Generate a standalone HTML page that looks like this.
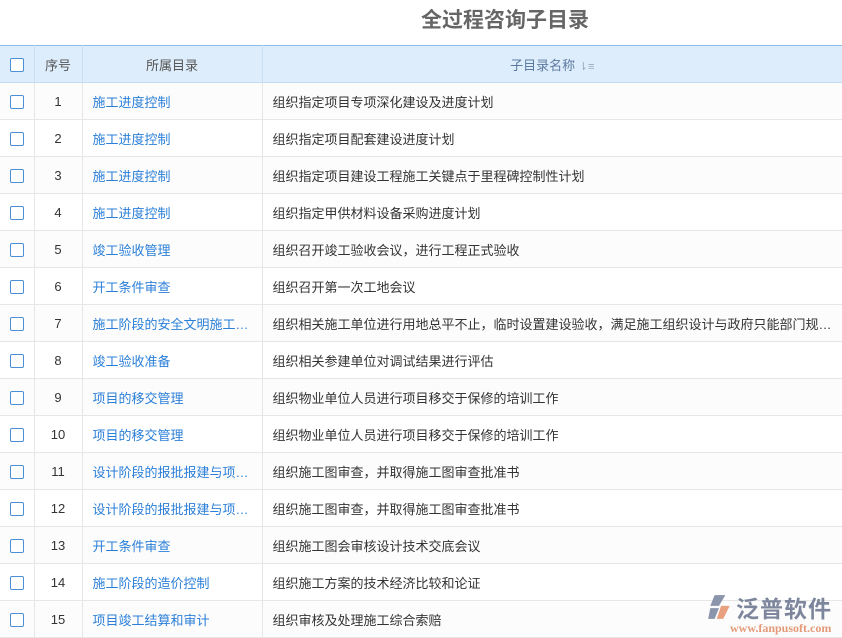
<!DOCTYPE html>
<html><head><meta charset="utf-8"><style>
body{margin:0;width:842px;height:638px;overflow:hidden;background:#fff;font-family:"Liberation Sans","Noto Sans CJK SC",sans-serif;}
h1{margin:0;height:45px;line-height:42px;text-align:center;font-size:21px;font-weight:bold;color:#666;padding-left:168px;box-sizing:border-box;}
table{border-collapse:collapse;width:842px;table-layout:fixed;font-size:13px;}
th{background:#deedfb;height:36px;font-weight:normal;color:#555;border-top:1px solid #8ebde9;border-bottom:1px solid #c4dcf2;border-right:1px solid #c9dff3;padding:0}
td{height:36px;border-bottom:1px solid #e6e6e6;border-right:1px solid #e6e6e6;padding:0;color:#333;white-space:nowrap;overflow:hidden;text-overflow:ellipsis}
th:last-child,td:last-child{border-right:none}
tr:nth-child(even) td{background:#fcfcfc}
.cb{display:inline-block;width:12px;height:12px;border:1px solid #4b8fd6;border-radius:2px;vertical-align:middle;background:#fff}
.c{text-align:center}
.l{color:#2b7fd8;padding-left:10px}
.n{padding-left:10px}
th.s{color:#5b7aa0}
</style></head><body>
<h1>全过程咨询子目录</h1>
<table>
<colgroup><col style="width:34px"><col style="width:48px"><col style="width:180px"><col></colgroup>
<tr><th><span class="cb"></span></th><th>序号</th><th>所属目录</th><th class="s">子目录名称 <span style="color:#9ab;font-size:11px">⇂≡</span></th></tr>
<tr><td class="c"><span class="cb"></span></td><td class="c">1</td><td class="l">施工进度控制</td><td class="n">组织指定项目专项深化建设及进度计划</td></tr>
<tr><td class="c"><span class="cb"></span></td><td class="c">2</td><td class="l">施工进度控制</td><td class="n">组织指定项目配套建设进度计划</td></tr>
<tr><td class="c"><span class="cb"></span></td><td class="c">3</td><td class="l">施工进度控制</td><td class="n">组织指定项目建设工程施工关键点于里程碑控制性计划</td></tr>
<tr><td class="c"><span class="cb"></span></td><td class="c">4</td><td class="l">施工进度控制</td><td class="n">组织指定甲供材料设备采购进度计划</td></tr>
<tr><td class="c"><span class="cb"></span></td><td class="c">5</td><td class="l">竣工验收管理</td><td class="n">组织召开竣工验收会议，进行工程正式验收</td></tr>
<tr><td class="c"><span class="cb"></span></td><td class="c">6</td><td class="l">开工条件审查</td><td class="n">组织召开第一次工地会议</td></tr>
<tr><td class="c"><span class="cb"></span></td><td class="c">7</td><td class="l">施工阶段的安全文明施工…</td><td class="n">组织相关施工单位进行用地总平不止，临时设置建设验收，满足施工组织设计与政府只能部门规…</td></tr>
<tr><td class="c"><span class="cb"></span></td><td class="c">8</td><td class="l">竣工验收准备</td><td class="n">组织相关参建单位对调试结果进行评估</td></tr>
<tr><td class="c"><span class="cb"></span></td><td class="c">9</td><td class="l">项目的移交管理</td><td class="n">组织物业单位人员进行项目移交于保修的培训工作</td></tr>
<tr><td class="c"><span class="cb"></span></td><td class="c">10</td><td class="l">项目的移交管理</td><td class="n">组织物业单位人员进行项目移交于保修的培训工作</td></tr>
<tr><td class="c"><span class="cb"></span></td><td class="c">11</td><td class="l">设计阶段的报批报建与项…</td><td class="n">组织施工图审查，并取得施工图审查批准书</td></tr>
<tr><td class="c"><span class="cb"></span></td><td class="c">12</td><td class="l">设计阶段的报批报建与项…</td><td class="n">组织施工图审查，并取得施工图审查批准书</td></tr>
<tr><td class="c"><span class="cb"></span></td><td class="c">13</td><td class="l">开工条件审查</td><td class="n">组织施工图会审核设计技术交底会议</td></tr>
<tr><td class="c"><span class="cb"></span></td><td class="c">14</td><td class="l">施工阶段的造价控制</td><td class="n">组织施工方案的技术经济比较和论证</td></tr>
<tr><td class="c"><span class="cb"></span></td><td class="c">15</td><td class="l">项目竣工结算和审计</td><td class="n">组织审核及处理施工综合索赔</td></tr>
</table>
<div style="position:absolute;left:706px;top:590px;width:132px;height:48px;">
<svg style="position:absolute;left:0;top:3px" width="28" height="28" viewBox="0 0 26 26"><path d="M8 2h10l-6 10H4z" fill="#8a94ab"/><path d="M4 14h8l-4 10H2z" fill="#8a94ab"/><path d="M14 12h8l-6 12h-6z" fill="#e8a07e"/></svg>
<div style="position:absolute;left:30px;top:0px;font-size:23px;color:#7d869c;font-weight:bold;letter-spacing:1px;white-space:nowrap">泛普软件</div>
<div style="position:absolute;left:24px;top:31px;font-size:12px;color:#e29a78;font-family:'Liberation Serif',serif;font-weight:bold;white-space:nowrap">www.fanpusoft.com</div>
</div>
</body></html>
